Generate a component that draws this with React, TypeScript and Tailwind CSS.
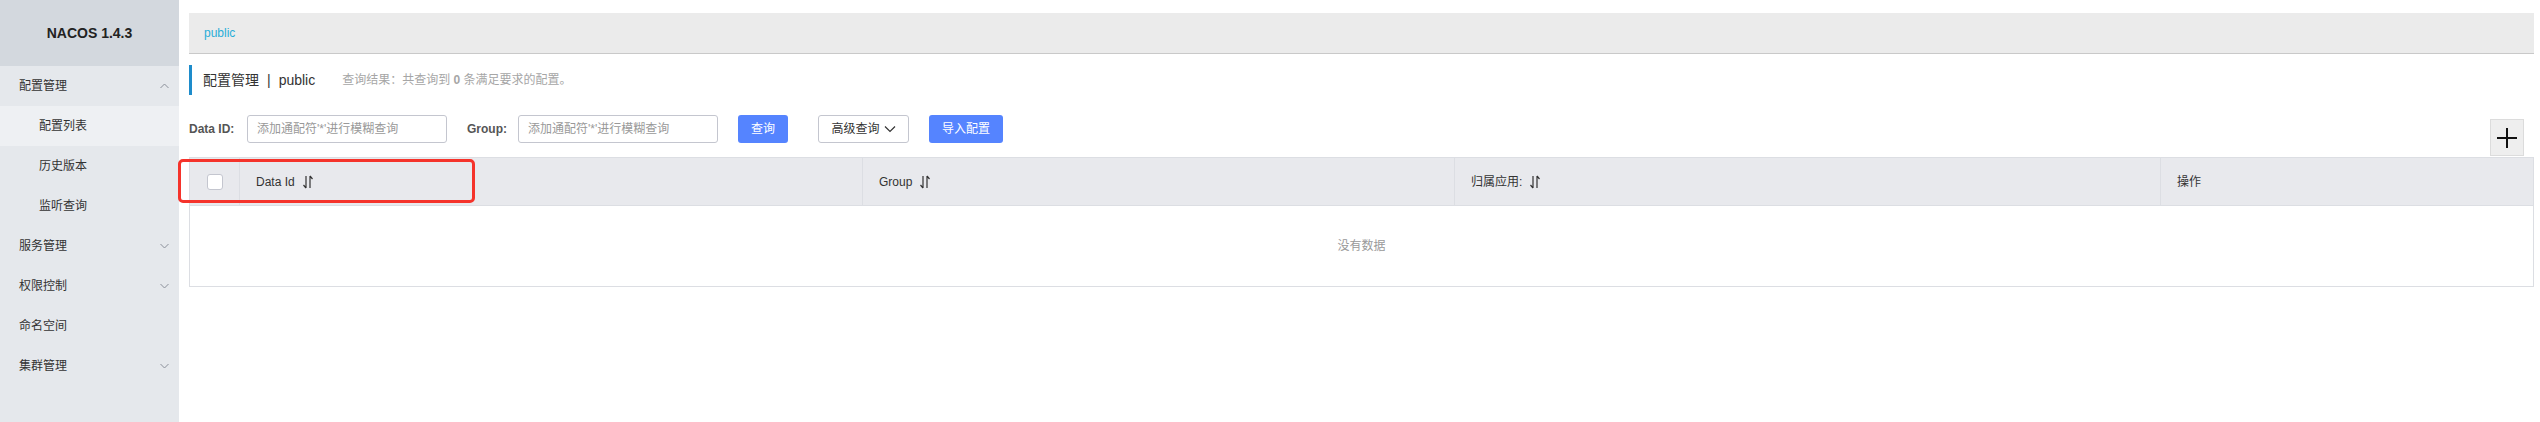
import React from 'react';

const font = { fontFamily: '"Liberation Sans", "Noto Sans CJK SC", sans-serif' };

const Chevron = ({ up }: { up?: boolean }) => (
  <svg width="9" height="6" viewBox="0 0 9 6" className="text-[#8a8f99]">
    {up ? (
      <polyline points="0.5,5 4.5,1 8.5,5" fill="none" stroke="currentColor" strokeWidth="1" />
    ) : (
      <polyline points="0.5,1 4.5,5 8.5,1" fill="none" stroke="currentColor" strokeWidth="1" />
    )}
  </svg>
);

const SortIcon = () => (
  <svg width="10" height="14" viewBox="0 0 10 14" className="text-[#333]">
    <path d="M3 1v12M3 13L0.5 10" fill="none" stroke="currentColor" strokeWidth="1.2" />
    <path d="M7 13V1M7 1l2.5 3" fill="none" stroke="currentColor" strokeWidth="1.2" />
  </svg>
);

const menu = [
  { label: '配置管理', open: true, children: ['配置列表', '历史版本', '监听查询'] },
  { label: '服务管理' },
  { label: '权限控制' },
  { label: '命名空间', leaf: true },
  { label: '集群管理' },
];

const Sidebar = () => (
  <aside className="w-[179px] shrink-0 h-[422px] bg-[#e5e8ec] text-[12px] text-[#333]">
    <div className="h-[66px] bg-[#d3d8de] flex items-center justify-center">
      <span className="font-bold text-[14px] text-[#222]">NACOS 1.4.3</span>
    </div>
    {menu.map((m) => (
      <div key={m.label}>
        <div className="h-[40px] flex items-center justify-between pl-[19px] pr-[10px]">
          <span>{m.label}</span>
          {!m.leaf && <Chevron up={m.open} />}
        </div>
        {m.children?.map((c, i) => (
          <div key={c} className={`h-[40px] flex items-center pl-[39px] ${i === 0 ? 'bg-[#eef0f3]' : ''}`}>
            {c}
          </div>
        ))}
      </div>
    ))}
  </aside>
);

const Input = () => (
  <div className="w-[200px] h-[28px] border border-[#c4c6cf] rounded-[3px] bg-white flex items-center pl-[9px] text-[12px] text-[#999]">
    添加通配符'*'进行模糊查询
  </div>
);

const columns = [
  { label: 'Data Id', w: 'w-[623px]', sort: true },
  { label: 'Group', w: 'w-[592px]', sort: true },
  { label: '归属应用:', w: 'w-[706px]', sort: true },
  { label: '操作', w: 'flex-1', sort: false },
];

export default function App() {
  return (
    <div className="flex w-[2540px] h-[422px] bg-white overflow-hidden" style={font}>
      <Sidebar />
      <main className="flex-1 pl-[10px] pr-[6px] pt-[13px]">
        <div className="h-[41px] bg-[#ebebeb] border-b border-[#c9c9c9] flex items-center pl-[15px] text-[12px] text-[#2aaed8]">
          public
        </div>

        <div className="mt-[11px] h-[30px] border-l-[3px] border-[#1e8ccb] flex items-center pl-[11px]">
          <span className="text-[14px] text-[#333]">配置管理</span>
          <span className="text-[14px] text-[#333] mx-[8px]">|</span>
          <span className="text-[14px] text-[#333]">public</span>
          <span className="ml-[27px] text-[12px] text-[#a6a6a6]">
            查询结果：共查询到 <span className="font-bold">0</span> 条满足要求的配置。
          </span>
        </div>

        <div className="mt-[20px] flex justify-between items-start h-[41px]">
          <div className="flex items-center">
            <span className="w-[58px] text-[12px] font-bold text-[#555]">Data ID:</span>
            <Input />
            <span className="ml-[20px] w-[51px] text-[12px] font-bold text-[#555]">Group:</span>
            <Input />
            <button className="ml-[20px] w-[50px] h-[28px] rounded-[3px] bg-[#5584ff] text-white text-[12px]">查询</button>
            <button className="ml-[30px] w-[91px] h-[28px] rounded-[3px] bg-white border border-[#c4c6cf] text-[#333] text-[12px] flex items-center justify-center gap-[4px]">
              高级查询
              <svg width="12" height="8" viewBox="0 0 12 8">
                <polyline points="1,1.5 6,6.5 11,1.5" fill="none" stroke="#333" strokeWidth="1.2" />
              </svg>
            </button>
            <button className="ml-[20px] w-[74px] h-[28px] rounded-[3px] bg-[#5584ff] text-white text-[12px]">导入配置</button>
          </div>
          <button className="mt-[4px] mr-[10px] w-[34px] h-[37px] bg-[#eeeeee] border border-[#dcdcdc] flex items-center justify-center">
            <svg width="22" height="22" viewBox="0 0 22 22">
              <path d="M11 1v20M1 11h20" stroke="#111" strokeWidth="2" />
            </svg>
          </button>
        </div>

        <div className="relative mt-[1px] border border-[#dcdee3]">
          <div className="flex h-[48px] bg-[#e8e9ed] border-b border-[#dcdee3] text-[12px] text-[#333]">
            <div className="w-[50px] flex items-center justify-center border-r border-[#dcdee3]">
              <div className="w-[16px] h-[16px] bg-white border border-[#c4c6cf] rounded-[3px]" />
            </div>
            {columns.map((c, i) => (
              <div
                key={c.label}
                className={`${c.w} flex items-center gap-[8px] pl-[16px] ${i < columns.length - 1 ? 'border-r border-[#dcdee3]' : ''}`}
              >
                <span>{c.label}</span>
                {c.sort && <SortIcon />}
              </div>
            ))}
          </div>
          <div className="h-[80px] flex items-center justify-center text-[12px] text-[#999]">没有数据</div>

          <div className="absolute left-[-12px] top-[1px] w-[297px] h-[44px] border-[3px] border-[#f5332b] rounded-[5px] pointer-events-none" />
        </div>
      </main>
    </div>
  );
}
